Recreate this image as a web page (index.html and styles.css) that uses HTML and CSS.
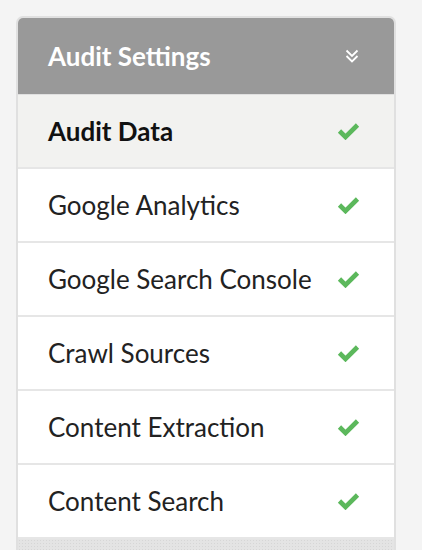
FILE: index.html
```html
<!DOCTYPE html>
<html>
<head>
<meta charset="utf-8">
<link rel="stylesheet" href="styles.css">
</head>
<body>
<div class="panel">
  <div class="panel-head">
    <span class="head-title">Audit Settings</span>
    <svg class="chev" width="16" height="16" viewBox="0 0 16 16"><polyline points="2.5,2.5 8,8 13.5,2.5" fill="none" stroke="#fff" stroke-width="1.8"/><polyline points="2.5,8 8,13.5 13.5,8" fill="none" stroke="#fff" stroke-width="1.8"/></svg>
  </div>
  <ul class="items">
    <li class="item active"><span>Audit Data</span><svg class="check" width="23" height="18" viewBox="0 0 23 18"><polyline points="2.5,9 8.5,15 20.5,3" fill="none" stroke="#5cb85c" stroke-width="4.6"/></svg></li>
    <li class="item"><span>Google Analytics</span><svg class="check" width="23" height="18" viewBox="0 0 23 18"><polyline points="2.5,9 8.5,15 20.5,3" fill="none" stroke="#5cb85c" stroke-width="4.6"/></svg></li>
    <li class="item"><span>Google Search Console</span><svg class="check" width="23" height="18" viewBox="0 0 23 18"><polyline points="2.5,9 8.5,15 20.5,3" fill="none" stroke="#5cb85c" stroke-width="4.6"/></svg></li>
    <li class="item"><span>Crawl Sources</span><svg class="check" width="23" height="18" viewBox="0 0 23 18"><polyline points="2.5,9 8.5,15 20.5,3" fill="none" stroke="#5cb85c" stroke-width="4.6"/></svg></li>
    <li class="item"><span>Content Extraction</span><svg class="check" width="23" height="18" viewBox="0 0 23 18"><polyline points="2.5,9 8.5,15 20.5,3" fill="none" stroke="#5cb85c" stroke-width="4.6"/></svg></li>
    <li class="item"><span>Content Search</span><svg class="check" width="23" height="18" viewBox="0 0 23 18"><polyline points="2.5,9 8.5,15 20.5,3" fill="none" stroke="#5cb85c" stroke-width="4.6"/></svg></li>
    <li class="item disabled"></li>
  </ul>
</div>
</body>
</html>
```
FILE: styles.css
```css
html, body {
  margin: 0;
  padding: 0;
  background: #f4f4f4;
  font-family: Lato, "Open Sans", sans-serif;
}
.panel {
  margin: 16px 0 0 16px;
  width: 380px;
  box-sizing: border-box;
  border: 2px solid #e0e0e0;
  border-bottom: none;
  border-radius: 7px 7px 0 0;
  overflow: hidden;
  background: #fff;
}
.panel-head {
  height: 76px;
  background: #999999;
  display: flex;
  align-items: center;
  justify-content: space-between;
  padding: 0 34px 0 30px;
  border-bottom: 1px solid #e0e0e0;
}
.head-title {
  color: #fff;
  font-weight: 700;
  font-size: 26px;
}
.chev {
  display: block;
}
.items {
  list-style: none;
  margin: 0;
  padding: 0;
}
.item {
  height: 72px;
  display: flex;
  align-items: center;
  justify-content: space-between;
  padding: 0 34px 0 30px;
  border-bottom: 2px solid #e6e6e6;
  color: #222;
  font-size: 26px;
  background: #fff;
}
.item.active {
  background: #f2f2f0;
  font-weight: 700;
  color: #111;
}
.check {
  display: block;
}
.item.disabled {
  height: 12px;
  border-bottom: none;
  background-color: #e4e4e4;
  background-image: radial-gradient(#d6d6d6 0.8px, transparent 1px);
  background-size: 3px 3px;
}
```
